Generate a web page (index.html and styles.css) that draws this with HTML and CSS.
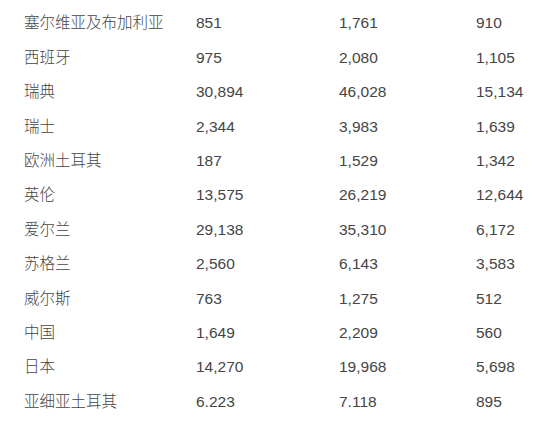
FILE: index.html
```html
<!DOCTYPE html>
<html>
<head>
<meta charset="utf-8">
<link rel="stylesheet" href="styles.css">
</head>
<body>
<div class="table">
  <div class="row"><span>塞尔维亚及布加利亚</span><span>851</span><span>1,761</span><span>910</span></div>
  <div class="row"><span>西班牙</span><span>975</span><span>2,080</span><span>1,105</span></div>
  <div class="row"><span>瑞典</span><span>30,894</span><span>46,028</span><span>15,134</span></div>
  <div class="row"><span>瑞士</span><span>2,344</span><span>3,983</span><span>1,639</span></div>
  <div class="row"><span>欧洲土耳其</span><span>187</span><span>1,529</span><span>1,342</span></div>
  <div class="row"><span>英伦</span><span>13,575</span><span>26,219</span><span>12,644</span></div>
  <div class="row"><span>爱尔兰</span><span>29,138</span><span>35,310</span><span>6,172</span></div>
  <div class="row"><span>苏格兰</span><span>2,560</span><span>6,143</span><span>3,583</span></div>
  <div class="row"><span>威尔斯</span><span>763</span><span>1,275</span><span>512</span></div>
  <div class="row"><span>中国</span><span>1,649</span><span>2,209</span><span>560</span></div>
  <div class="row"><span>日本</span><span>14,270</span><span>19,968</span><span>5,698</span></div>
  <div class="row"><span>亚细亚土耳其</span><span>6.223</span><span>7.118</span><span>895</span></div>
</div>
</body>
</html>
```
FILE: styles.css
```css
html, body {
  margin: 0;
  padding: 0;
  background: #ffffff;
}
body {
  font-family: "Liberation Sans", "Noto Sans CJK SC", sans-serif;
  font-size: 15.5px;
  font-weight: 300;
  color: #454545;
}
.table {
  padding: 6px 0 0 24px;
}
.row {
  display: grid;
  grid-template-columns: 172px 143px 137px 1fr;
  height: 34.4px;
  align-items: center;
  line-height: 1;
}
```
